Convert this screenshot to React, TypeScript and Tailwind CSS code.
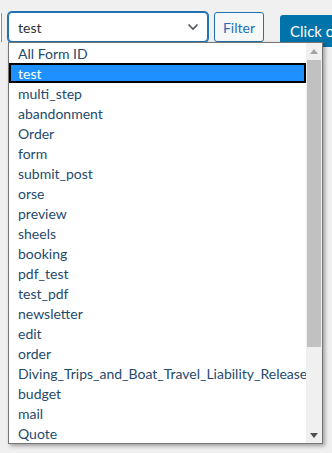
const forms = [
  'All Form ID',
  'test',
  'multi_step',
  'abandonment',
  'Order',
  'form',
  'submit_post',
  'orse',
  'preview',
  'sheels',
  'booking',
  'pdf_test',
  'test_pdf',
  'newsletter',
  'edit',
  'order',
  'Diving_Trips_and_Boat_Travel_Liability_Release',
  'budget',
  'mail',
  'Quote'
];

function Chevron() {
  return (
    <svg width="12" height="8" viewBox="0 0 12 8" className="text-[#50575e]">
      <path d="M1.5 1.5 L6 6 L10.5 1.5" fill="none" stroke="currentColor" strokeWidth="1.6" />
    </svg>
  );
}

function Scrollbar() {
  return (
    <div className="flex w-[16px] shrink-0 flex-col bg-[#f0f0f0]">
      <div className="flex h-[16px] items-center justify-center">
        <svg width="8" height="5" viewBox="0 0 8 5">
          <path d="M0 5 L4 0 L8 5 Z" fill="#a3a3a3" />
        </svg>
      </div>
      <div className="mx-[1px] mt-[1px] h-[287px] bg-[#c1c1c1]" />
      <div className="flex-1" />
      <div className="flex h-[16px] items-center justify-center">
        <svg width="8" height="5" viewBox="0 0 8 5">
          <path d="M0 0 L8 0 L4 5 Z" fill="#505050" />
        </svg>
      </div>
    </div>
  );
}

export default function App() {
  return (
    <div className="relative h-[453px] w-[332px] overflow-hidden bg-[#f0f0f1] font-['Lato',sans-serif]">
      <div className="flex items-start pt-[12px]">
        <div className="mt-[1px] h-[29px] w-[2px] shrink-0 border-r border-[#8c8f94] bg-white" />
        <div className="ml-[6px] flex h-[30px] w-[200px] shrink-0 items-center justify-between rounded-[4px] border border-[#2271b1] bg-white pl-[9px] pr-[8px] shadow-[0_0_0_1px_#2271b1]">
          <span className="text-[14px] text-[#2c3338]">test</span>
          <Chevron />
        </div>
        <button
          type="button"
          className="ml-[6px] h-[30px] w-[50px] shrink-0 rounded-[3px] border border-[#2271b1] bg-[#f6f7f7] text-[14px] text-[#2271b1]"
        >
          Filter
        </button>
        <button
          type="button"
          className="ml-[16px] mt-[3px] h-[32px] shrink-0 whitespace-nowrap rounded-[3px] bg-[#0073aa] pl-[10px] pr-[10px] text-[15px] text-white"
        >
          Click on to see
        </button>
      </div>

      <div className="absolute left-[8px] top-[42px] flex h-[402px] w-[315px] border border-[#767676] bg-white shadow-[2px_2px_4px_rgba(0,0,0,0.35)]">
        <ul className="min-w-0 flex-1 overflow-hidden">
          {forms.map((name, i) => (
            <li
              key={name}
              className={
                i === 1
                  ? 'flex h-[20px] items-center border-2 border-black bg-[#1e90ff] pl-[7px] text-[14px] text-white'
                  : 'flex h-[20px] items-center whitespace-nowrap pl-[9px] text-[14px] text-[#1f4a6b]'
              }
            >
              {name}
            </li>
          ))}
        </ul>
        <Scrollbar />
      </div>
    </div>
  );
}
